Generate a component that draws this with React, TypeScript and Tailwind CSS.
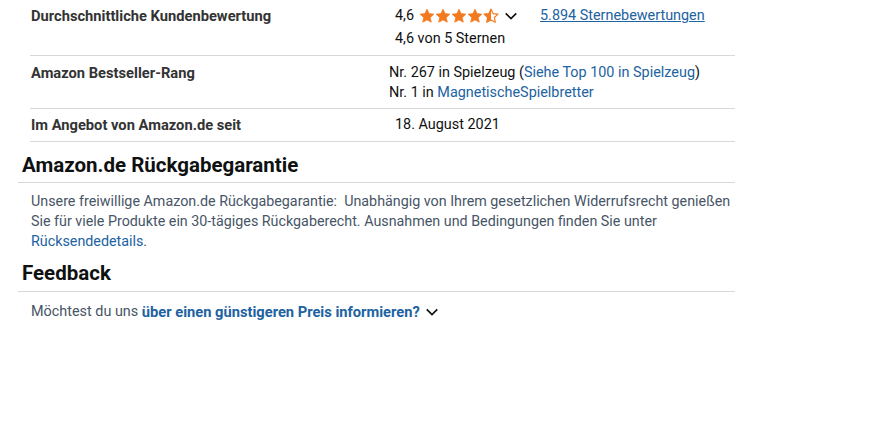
import React from "react";

const Star = ({ half = false }: { half?: boolean }) => (
  <svg width="16" height="16" viewBox="0 0 24 24" className="shrink-0">
    <defs>
      <linearGradient id="halfg" x1="0" x2="1" y1="0" y2="0">
        <stop offset="50%" stopColor="#F37A1F" />
        <stop offset="50%" stopColor="#ffffff" stopOpacity="0" />
      </linearGradient>
    </defs>
    <path
      d="M12 1.6l3.1 6.7 7.3.9-5.4 5 1.4 7.2L12 17.9l-6.4 3.5 1.4-7.2-5.4-5 7.3-.9z"
      fill={half ? "url(#halfg)" : "#F37A1F"}
      stroke="#F37A1F"
      strokeWidth={half ? 1.8 : 1}
      strokeLinejoin="round"
    />
  </svg>
);

const Chevron = () => (
  <svg width="14" height="14" viewBox="0 0 16 16" className="shrink-0">
    <path d="M2 5 8 11l6-6" fill="none" stroke="#0F1111" strokeWidth="1.9" />
  </svg>
);

export default function App() {
  return (
    <div
      className="w-[893px] h-[430px] bg-white text-[14.4px] text-[#0F1111]"
      style={{ fontFamily: 'Roboto, Arial, sans-serif' }}
    >
      <div className="w-[735px] pl-[18px]">
        <div className="ml-[12px]">
          {/* Row 1 */}
          <div className="flex border-b border-[#d5d9d9] pt-[5px] pb-[6px]">
            <div className="w-[359px] pl-px font-bold text-[14.7px] text-[#333333] h-[22px] flex items-center">
              Durchschnittliche Kundenbewertung
            </div>
            <div className="pl-[6px]">
              <div className="h-[22px] flex items-center">
                <span>4,6</span>
                <span className="flex ml-[5px]">
                  <Star />
                  <Star />
                  <Star />
                  <Star />
                  <Star half />
                </span>
                <span className="ml-[5px] flex">
                  <Chevron />
                </span>
                <a className="ml-[22px] text-[#2162A1] underline">5.894 Sternebewertungen</a>
              </div>
              <div className="mt-[2px] leading-5 text-[#0F1111]">4,6 von 5 Sternen</div>
            </div>
          </div>
          {/* Row 2 */}
          <div className="flex border-b border-[#d5d9d9] pt-[7px] pb-[5px] leading-5">
            <div className="w-[359px] pl-px font-bold text-[14.7px] text-[#333333]">Amazon Bestseller-Rang</div>
            <div>
              <div>
                Nr. 267 in Spielzeug (<a className="text-[#2162A1]">Siehe Top 100 in Spielzeug</a>)
              </div>
              <div>
                Nr. 1 in <a className="text-[#2162A1]">MagnetischeSpielbretter</a>
              </div>
            </div>
          </div>
          {/* Row 3 */}
          <div className="flex border-b border-[#d5d9d9] pt-[6px] pb-[6px] leading-5">
            <div className="w-[359px] pl-px font-bold text-[14.7px] text-[#333333]">Im Angebot von Amazon.de seit</div>
            <div className="pl-[6px]">18. August 2021</div>
          </div>
        </div>

        {/* Rückgabegarantie */}
        <h2 className="mt-[11px] pl-[4px] pb-[5px] text-[20.5px] leading-6 font-bold text-[#0F1111] border-b border-[#d5d9d9]">
          Amazon.de Rückgabegarantie
        </h2>
        <p className="mt-[8px] pl-[13px] leading-5 text-[14.3px] text-[#475566]">
          Unsere freiwillige Amazon.de Rückgabegarantie:&nbsp; Unabhängig von Ihrem gesetzlichen Widerrufsrecht genießen
          Sie für viele Produkte ein 30-tägiges Rückgaberecht. Ausnahmen und Bedingungen finden Sie unter{" "}
          <a className="text-[#2162A1]">Rücksendedetails</a>.
        </p>

        {/* Feedback */}
        <h2 className="mt-[10px] pl-[4px] pb-[6px] text-[20.5px] leading-6 font-bold text-[#0F1111] border-b border-[#d5d9d9]">
          Feedback
        </h2>
        <div className="mt-[10px] pl-[13px] leading-5 flex items-center text-[#475566]">
          <span>Möchtest du uns&nbsp;</span>
          <a className="font-bold text-[14.7px] text-[#2162A1]">über einen günstigeren Preis informieren?</a>
          <span className="ml-[5px] flex">
            <Chevron />
          </span>
        </div>
      </div>
    </div>
  );
}
